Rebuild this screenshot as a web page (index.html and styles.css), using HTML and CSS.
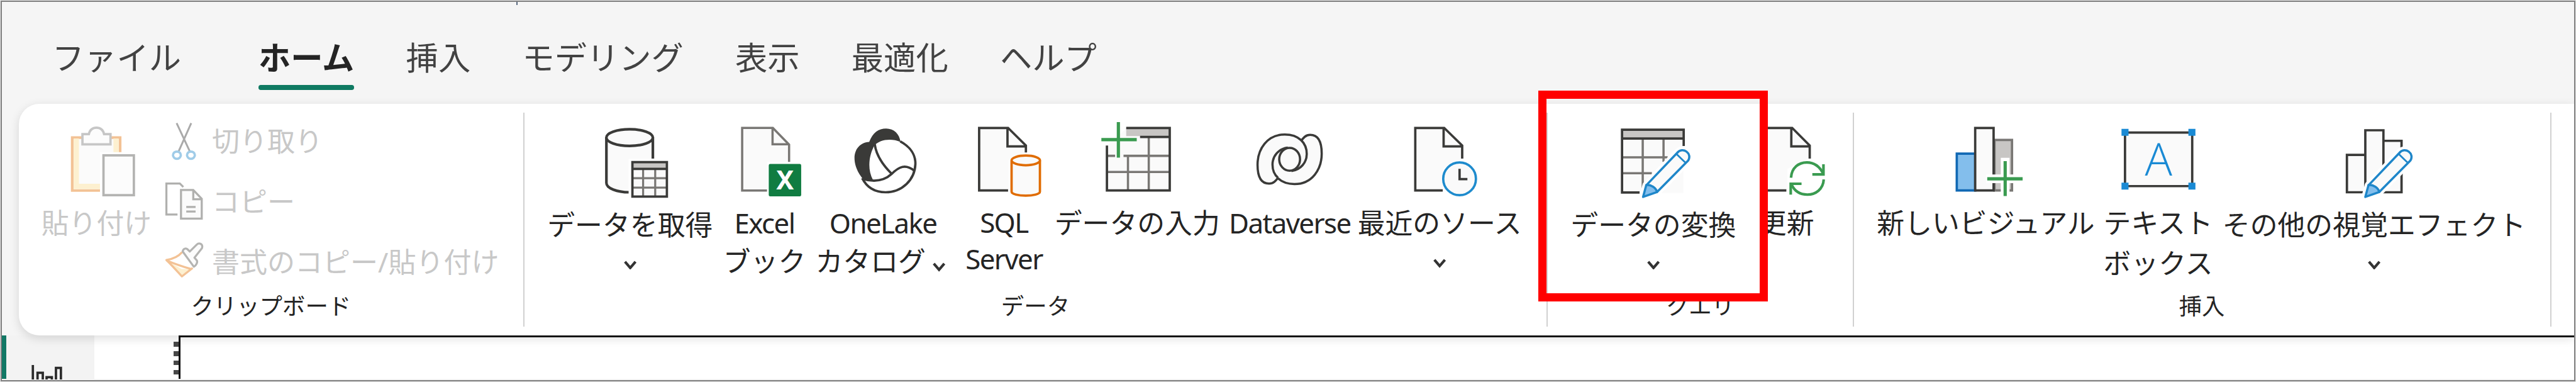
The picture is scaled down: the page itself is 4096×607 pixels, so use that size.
FILE: index.html
```html
<!DOCTYPE html>
<html lang="ja">
<head>
<meta charset="utf-8">
<title>ホーム</title>
<link rel="stylesheet" href="styles.css">
</head>
<body>
<div class="window">
  <nav class="tabs">
    <span class="caret"></span>
    <a class="tab tab-file">ファイル</a>
    <a class="tab tab-active">ホーム</a>
    <a class="tab">挿入</a>
    <a class="tab">モデリング</a>
    <a class="tab">表示</a>
    <a class="tab">最適化</a>
    <a class="tab">ヘルプ</a>
  </nav>

  <main class="ribbon">
    <section class="group group-clipboard">
      <div class="commands">
        <button class="command paste disabled">
          <svg class="icon" viewBox="101 210 130 130">
            <path d="M124.500 236.500H206.500V327H124.500Z" fill="#fbfbfb" stroke="#f3c295" stroke-width="4.500"/>
            <path d="M131.500 238V320H174M199.500 238V262" fill="none" stroke="#fdf0d0" stroke-width="9"/>
            <path d="M142 230.500H153C155 222 160 219.500 166 219.500S177 222 179 230.500H190V248H142Z" fill="#fcfcfc" stroke="#c6c6c6" stroke-width="4"/>
            <path d="M178 267.500H230V335H178Z" fill="#fcfcfc" stroke="#fff" stroke-width="12"/>
            <path d="M178 267H230V335H178Z" fill="#fcfcfc" stroke="#b4b4b2" stroke-width="4"/>
          </svg>
          <span class="label">貼り付け</span>
        </button>
        <div class="small-commands">
          <button class="small disabled">
            <svg class="small-icon" viewBox="280 207 72 72" fill="none">
              <path d="M303.500 211L326 259M328.500 211L307 259" stroke="#aaa" stroke-width="3.200"/>
              <ellipse cx="304" cy="265.700" rx="6.700" ry="6.200" stroke="#a0cce8" stroke-width="4"/>
              <ellipse cx="328" cy="265.700" rx="6.700" ry="6.200" stroke="#a0cce8" stroke-width="4"/>
            </svg>
            <span>切り取り</span>
          </button>
          <button class="small disabled">
            <svg class="small-icon" viewBox="280 310 72 72" fill="none" stroke="#b0b0ae" stroke-width="3.500">
              <path d="M315 321L309 315H286V368H305"/>
              <path d="M311 326H332L346.500 341V375H311Z" fill="#fbfbfb"/>
              <path d="M332 326V342H346.500M320 355H336M320 363H336"/>
            </svg>
            <span>コピー</span>
          </button>
          <button class="small disabled">
            <svg class="small-icon" viewBox="280 413 72 72" fill="none" stroke-width="3.500" stroke-linejoin="round">
              <path d="M286 446L312 461L329 461L312.500 473.500Z" fill="#fdf0d0"/>
              <path d="M313 432C306 440 296 444 286 445.500C295 454 304 464 312.500 473.500L331 459M286 446C300 452 315 457 329 461" stroke="#f3c295"/>
              <path d="M314 431C314 427 319 424 322 427L326 431L338 419C342 415 349 418 347 425L334 441.500L338 446C340 449 337 455 333 457Z" fill="#fcfcfc" stroke="#b4b4b2"/>
            </svg>
            <span>書式のコピー/貼り付け</span>
          </button>
        </div>
      </div>
      <div class="caption">クリップボード</div>
    </section>
    <div class="divider"></div>

    <section class="group group-data">
      <div class="commands">
        <button class="command get-data low">
          <svg class="icon" viewBox="1014 210 130 130" fill="none" stroke="#3a3a38" stroke-width="4.500">
            <path d="M1039 236V314C1039 323 1058 330 1078 330H1084V300L1118.500 272V236Z" fill="#fafafa" stroke="none"/>
            <path d="M1078 330C1057 330 1039 323 1039 314V236M1118.500 236V272.500"/>
            <ellipse cx="1078.700" cy="236.500" rx="39.800" ry="14.300" fill="#fafafa"/>
            <path d="M1077 273H1149V344H1077Z" fill="#fff" stroke="none"/>
            <path d="M1083.500 278.500H1142.500V337.500H1083.500Z" fill="#fafafa" stroke="none"/>
            <path d="M1083.500 278.500H1142.500V290H1083.500Z" fill="#c8c6c4" stroke="none"/>
            <path d="M1101.800 291V337M1122.500 291V337M1083 306H1142M1083 322H1142" stroke="#797774" stroke-width="3.500"/>
            <path d="M1083.500 278.500H1142.500V337.500H1083.500ZM1083 290H1143" stroke-width="4"/>
          </svg>
          <span class="label">データを取得</span>
          <svg class="chevron" viewBox="0 0 24 16"><path d="M3 2L12 12.500L21 2"/></svg>
        </button>
        <button class="command excel">
          <svg class="icon" viewBox="1244 210 130 130" fill="none" stroke="#797774" stroke-width="3.800">
            <path d="M1271 220H1323.500L1351.300 248.500V278H1314V327H1271Z" fill="#fafafa" stroke="none"/>
            <path d="M1351.300 278V248.500L1323.500 220H1271V327H1313.500M1323 220V248H1351"/>
            <rect x="1316.500" y="281.700" width="55.500" height="55.300" rx="2.500" fill="#107c41" stroke="none"/>
            <text x="1344.500" y="325.500" class="excel-mark">X</text>
          </svg>
          <span class="label"><span class="latin">Excel</span><br>ブック</span>
        </button>
        <button class="command onelake">
          <svg class="icon" viewBox="1447 210 130 130" fill="none" stroke="#3a3a38" stroke-width="4" stroke-linejoin="round">
            <path d="M1488 244C1494 228 1504 221 1517 221C1530 221 1540 230 1541.500 244C1525 237 1506 240 1497 250C1488 265 1484 290 1494.500 309L1477 307C1454 279 1460 246 1488 244Z" fill="#3a3a38" stroke="none"/>
            <path d="M1541 243C1558 252 1567.500 266 1567 282C1566 309 1544 330 1516 330C1496 330 1483 320 1476 306"/>
            <path d="M1497.500 248C1500 268 1512 284 1526 298"/>
            <path d="M1476 307C1497 313 1513 311 1526 299C1539 286 1550 281 1565 293"/>
          </svg>
          <span class="label"><span class="latin">OneLake</span><br>カタログ<svg class="chevron inline" viewBox="0 0 24 16"><path d="M3 2L12 12.500L21 2"/></svg></span>
        </button>
        <button class="command sql">
          <svg class="icon" viewBox="1654 210 130 130" fill="none" stroke="#3a3a38" stroke-width="4">
            <path d="M1676.500 220H1726L1756.500 250V262L1727 275V327H1676.500Z" fill="#fafafa" stroke="none"/>
            <path d="M1756.500 262V250L1726 220H1676.500V327H1726M1725 220V251.500H1757"/>
            <path d="M1732 276V329C1732 338 1780.500 338 1780.500 329V276" fill="#fafafa" stroke="#e06c00"/>
            <ellipse cx="1756.300" cy="275.500" rx="24.300" ry="8.300" fill="#fafafa" stroke="#e06c00"/>
          </svg>
          <span class="label latin">SQL<br>Server</span>
        </button>
        <button class="command enter-data">
          <svg class="icon" viewBox="1882 210 130 130" fill="none" stroke="#797774" stroke-width="3.800">
            <path d="M1895 250L1930 220H2002V327H1895Z" fill="#fafafa" stroke="none"/>
            <path d="M1928 220H2002V234H1928Z" fill="#c8c6c4" stroke="none"/>
            <path d="M1966.600 236V327M1931 268V327M1896 267.700H1909M1923.400 267.700H2002M1896 295.300H2002"/>
            <path d="M1895 250V327H2002.500V220H1928M1951.700 235.500H2002" stroke="#3a3a38" stroke-width="4"/>
            <path d="M1914.600 210V270.700M1885.500 240H1946" stroke="#3a9b50" stroke-width="5.500"/>
          </svg>
          <span class="label">データの入力</span>
        </button>
        <button class="command dataverse">
          <svg class="icon" viewBox="2143 210 130 130" stroke="#3a3a38" stroke-width="3.800">
            <path fill="#fafafa" d="M2205 253.600C2189.100 255.700 2178.900 268.200 2178.900 282.700C2178.900 301.500 2192.300 316 2216.500 316C2246.500 316 2263.100 291.100 2263.100 264C2263.100 241.100 2256.100 231.900 2243.300 231.900C2235.700 231.900 2231.800 236.900 2228 241.900"/>
            <path fill="#fafafa" d="M2211.400 293.600C2227.300 291.500 2237.500 279 2237.500 264.500C2237.500 245.700 2224.100 231.200 2199.900 231.200C2169.900 231.200 2153.300 256.100 2153.300 283.200C2153.300 306.100 2160.300 315.300 2173.100 315.300C2180.700 315.300 2184.600 310.300 2188.400 305.300"/>
            <path fill="none" d="M2205 253.600C2189.100 255.700 2178.900 268.200 2178.900 282.700C2178.900 292 2182 300 2188.400 305.300"/>
            <ellipse cx="2208.200" cy="273.600" rx="17.800" ry="19.500" fill="#fafafa"/>
          </svg>
          <span class="label latin">Dataverse</span>
        </button>
        <button class="command recent">
          <svg class="icon" viewBox="2399.500 210 130 130" fill="none" stroke="#3a3a38" stroke-width="4">
            <path d="M2422.500 220H2472L2502.800 250V272L2470 290V327H2422.500Z" fill="#fafafa" stroke="none"/>
            <path d="M2502.800 272.500V250L2472 220H2422.500V327H2469.500M2471 220V251.600H2503"/>
            <circle cx="2498.300" cy="307" r="31" fill="#fff" stroke="none"/>
            <circle cx="2498.300" cy="307" r="28" fill="#fafafa" stroke="#1e8bcd"/>
            <path d="M2498.300 290V307.500H2511.700"/>
          </svg>
          <span class="label">最近のソース</span>
          <svg class="chevron" viewBox="0 0 24 16"><path d="M3 2L12 12.500L21 2"/></svg>
        </button>
      </div>
      <div class="caption">データ</div>
    </section>
    <div class="divider"></div>

    <section class="group group-query">
      <div class="commands">
        <button class="command transform low">
          <svg class="icon" viewBox="2765 210 130 130" fill="none" stroke="#797774" stroke-width="3.800">
            <path d="M2777 223H2882V331H2777Z" fill="#fafafa" stroke="none"/>
            <path d="M2777 223H2882V237H2777Z" fill="#c8c6c4" stroke="none"/>
            <path d="M2812.400 238V323M2848 238V278M2777 270.300H2855M2777 297.400H2828"/>
            <path d="M2882.500 251V223H2777V330.500H2807M2777 238H2882" stroke="#3a3a38" stroke-width="4"/>
            <g id="pencil" stroke="#1e86c9" stroke-width="3.800" stroke-linejoin="round">
              <path d="M2813 338L2818.500 318L2871 263C2881 251 2898 264 2890 276L2837 329.500Z" fill="#fff" stroke="#fff" stroke-width="13"/>
              <path d="M2818.500 318L2871 263C2881 251 2898 264 2890 276L2837 329.500Z" fill="#fafafa"/>
              <path d="M2813 338L2818.500 317.500C2827 317 2835 322 2837 329.500Z" fill="#83beec"/>
              <path d="M2870.500 265L2885 279" stroke-width="3"/>
            </g>
          </svg>
          <span class="label">データの変換</span>
          <svg class="chevron" viewBox="0 0 24 16"><path d="M3 2L12 12.500L21 2"/></svg>
        </button>
        <button class="command refresh">
          <svg class="icon" viewBox="2993 210 130 130" fill="none" stroke="#3a3a38" stroke-width="4">
            <path d="M3017 220H3068L3098 250V272L3060 290V327H3017Z" fill="#fafafa" stroke="none"/>
            <path d="M3098 272.500V250L3068 220H3017V327H3058M3066.500 220V251.600H3098"/>
            <g stroke="#3a9b50" stroke-width="4.500">
              <path d="M3066 305C3067 288 3079 279 3093 279C3106 279 3115 286 3121 298"/>
              <path d="M3121.500 282V299.500H3102.500"/>
              <path d="M3122 308C3121 325 3108 334 3094 334C3081 334 3072 328 3067 317"/>
              <path d="M3084 315.500H3065.500V334"/>
            </g>
          </svg>
          <span class="label">更新</span>
        </button>
      </div>
      <div class="caption">クエリ</div>
      <div class="highlight"></div>
    </section>
    <div class="divider"></div>

    <section class="group group-insert">
      <div class="commands">
        <button class="command new-visual">
          <svg class="icon" viewBox="3334 210 130 130" fill="none" stroke-width="4">
            <path d="M3414 240.500H3444V327H3414Z" fill="#c8c6c4" stroke="#797774"/>
            <path d="M3349.500 264H3381V327H3349.500Z" fill="#83beec" stroke="#1068b4"/>
            <path d="M3381 220H3412.500V327H3381Z" fill="#fafafa" stroke="#3a3a38"/>
            <path d="M3432.300 271V342M3400 307H3467" stroke="#fff" stroke-width="15"/>
            <path d="M3432.300 276.600V336.500M3401.600 307H3462.200" stroke="#3a9b50" stroke-width="5.500"/>
          </svg>
          <span class="label">新しいビジュアル</span>
        </button>
        <button class="command text-box">
          <svg class="icon" viewBox="3629 210 130 130">
            <path d="M3637.500 228H3752.500V319.500H3637.500Z" fill="#fafafa" stroke="#3a3a38" stroke-width="4"/>
            <path d="M3631.500 221.500h12v12h-12zM3746 221.500h12v12h-12zM3631.500 313.500h12v12h-12zM3746 313.500h12v12h-12z" fill="#1a8ad4"/>
            <text x="3695" y="301.500" class="text-mark">A</text>
          </svg>
          <span class="label">テキスト<br>ボックス</span>
        </button>
        <button class="command more-visuals low">
          <svg class="icon" viewBox="3998.500 210 130 130" fill="#fafafa" stroke="#3a3a38" stroke-width="4">
            <path d="M4016.500 266H4048V330H4016.500ZM4079 242H4110V330H4079ZM4048 224H4079V330H4048Z"/>
            <path d="M4050 326H4077V333H4050Z" fill="#fff" stroke="none"/>
            <use href="#pencil" x="1235"/>
          </svg>
          <span class="label">その他の視覚エフェクト</span>
          <svg class="chevron" viewBox="0 0 24 16"><path d="M3 2L12 12.500L21 2"/></svg>
        </button>
      </div>
      <div class="caption">挿入</div>
    </section>
    <div class="divider"></div>
  </main>

  <div class="workspace">
    <aside class="rail">
      <svg class="report-icon" viewBox="54 624 56 26" fill="none" stroke="#2b2b2b" stroke-width="4">
        <path d="M57.500 625V652M65.500 652V638.500H74.500V652M81 652V646H90V652M97 652V630H105.500V652"/>
      </svg>
    </aside>
    <div class="ruler"><i></i><i></i><i></i><i></i></div>
    <div class="page"></div>
  </div>
</div>
</body>
</html>
```
FILE: styles.css
```css
* { box-sizing: border-box; }

body {
  margin: 0;
  background: #e8e8e8;
  overflow: hidden;
  font-family: "Noto Sans", "Noto Sans CJK JP", sans-serif;
  color: #242424;
}

/* The layout is designed on a 4408 x 653 surface. */
.window {
  zoom: 0.92922;
  width: 4406px;
  height: 651px;
  margin: 1px;
  border: 3px solid #808080;
  background: #f5f5f5;
  overflow: hidden;
  display: flex;
  flex-direction: column;
}

/* Tabs */
.tabs {
  position: relative;
  flex: none;
  height: 174px;
  padding: 53px 0 0 86px;
  display: flex;
  gap: 88.500px;
}
.caret {
  position: absolute;
  left: 880px;
  top: 0;
  width: 3px;
  height: 5px;
  background: #5a6a80;
}
.tab {
  height: 99px;
  font-family: "Noto Sans CJK JP", sans-serif;
  font-size: 55.200px;
  line-height: 80px;
  color: #424242;
  white-space: nowrap;
}
.tab-file { margin-right: 44px; }
.tab-active {
  font-weight: 700;
  color: #242424;
  display: flex;
  flex-direction: column;
  gap: 9px;
}
.tab-active::after {
  content: "";
  height: 8.500px;
  border-radius: 4px;
  background: #0f7a62;
}

/* Ribbon */
.ribbon {
  position: relative;
  z-index: 1;
  flex: none;
  height: 397px;
  margin-left: 29px;
  border-radius: 35px 0 0 35px;
  background: #fff;
  box-shadow: 0 5px 16px rgba(0, 0, 0, 0.13);
  display: flex;
}
.divider {
  flex: none;
  width: 2px;
  margin: 16px 0;
  background: #d1d1d1;
}
.group {
  position: relative;
  flex: none;
  display: flex;
  flex-direction: column;
}
.group-clipboard { width: 863px; }
.group-data { width: 1749.500px; }
.group-query { width: 521.500px; }
.group-insert { width: 1191.500px; }
.commands {
  height: 321px;
  padding-top: 32px;
  display: flex;
  align-items: flex-start;
}
.caption {
  font-size: 39.200px;
  line-height: 50px;
  text-align: center;
}

button {
  padding: 0;
  border: 0;
  background: none;
  font: inherit;
  color: inherit;
}
.command {
  flex: none;
  display: flex;
  flex-direction: column;
  align-items: center;
  font-size: 47.200px;
}
.icon {
  width: 130px;
  height: 130px;
  overflow: visible;
}
.label {
  margin-top: 11px;
  line-height: 64px;
  white-space: nowrap;
}
.low .label { margin-top: 14px; }
.latin { letter-spacing: -1.700px; }
.excel .label, .onelake .label { line-height: 65.500px; margin-top: 10px; }
.sql .label { line-height: 62px; margin-top: 11px; }
.text-box .label { line-height: 68px; margin-top: 9px; }
.disabled { color: #c8c8c8; }
.chevron {
  width: 24px;
  height: 16px;
  margin-top: 28px;
  fill: none;
  stroke: #333;
  stroke-width: 4.500;
}
.chevron.inline { margin: 0 8px 0 11px; }

.paste { width: 188px; margin-left: 39px; }
.get-data { width: 282px; margin-left: 40px; }
.excel { width: 140px; margin-left: 19px; }
.onelake { width: 236px; margin-left: 15px; }
.sql { width: 138px; margin-left: 20px; }
.enter-data { width: 282px; margin-left: 18px; }
.dataverse { width: 208px; margin-left: 16px; }
.recent { width: 282px; margin-left: 11.500px; }
.transform { width: 282px; margin-left: 39.500px; }
.refresh { width: 94px; margin-left: 40px; }
.new-visual { width: 376px; margin-left: 38px; }
.text-box { width: 188px; margin-left: 13px; }
.more-visuals { width: 517px; margin-left: 17px; }

.small-commands {
  margin: -3px 0 0 20px;
  display: flex;
  flex-direction: column;
  gap: 31px;
}
.small {
  display: flex;
  align-items: center;
  gap: 11.500px;
  height: 72px;
  font-size: 47.400px;
  line-height: 66px;
  white-space: nowrap;
}
.small-icon {
  width: 72px;
  height: 72px;
}

.excel-mark {
  font: 700 45px "Noto Sans", sans-serif;
  fill: #fff;
  stroke: none;
  text-anchor: middle;
}
.text-mark {
  font: 300 78px "Open Sans", sans-serif;
  fill: #1a8ad4;
  text-anchor: middle;
}

/* Frame drawn over the data transformation command */
.highlight {
  position: absolute;
  left: -16.500px;
  top: -22px;
  width: 393px;
  height: 360px;
  border: 14px solid #f00;
}

/* Workspace under the ribbon */
.workspace {
  flex: none;
  height: 74px;
  display: flex;
  background: #fff;
}
.rail {
  width: 158px;
  border-left: 8px solid #117865;
  background: #f3f3f3;
  padding: 49px 0 0 42px;
}
.report-icon {
  display: block;
  width: 56px;
  height: 26px;
}
.ruler {
  width: 8.500px;
  margin-left: 135.500px;
  padding-top: 10.500px;
  display: flex;
  flex-direction: column;
  gap: 8px;
}
.ruler i {
  flex: none;
  height: 8px;
  background: #484848;
}
.page {
  position: relative;
  z-index: 2;
  flex: 1;
  border: solid #111;
  border-width: 4px 0 0 4px;
}
```
